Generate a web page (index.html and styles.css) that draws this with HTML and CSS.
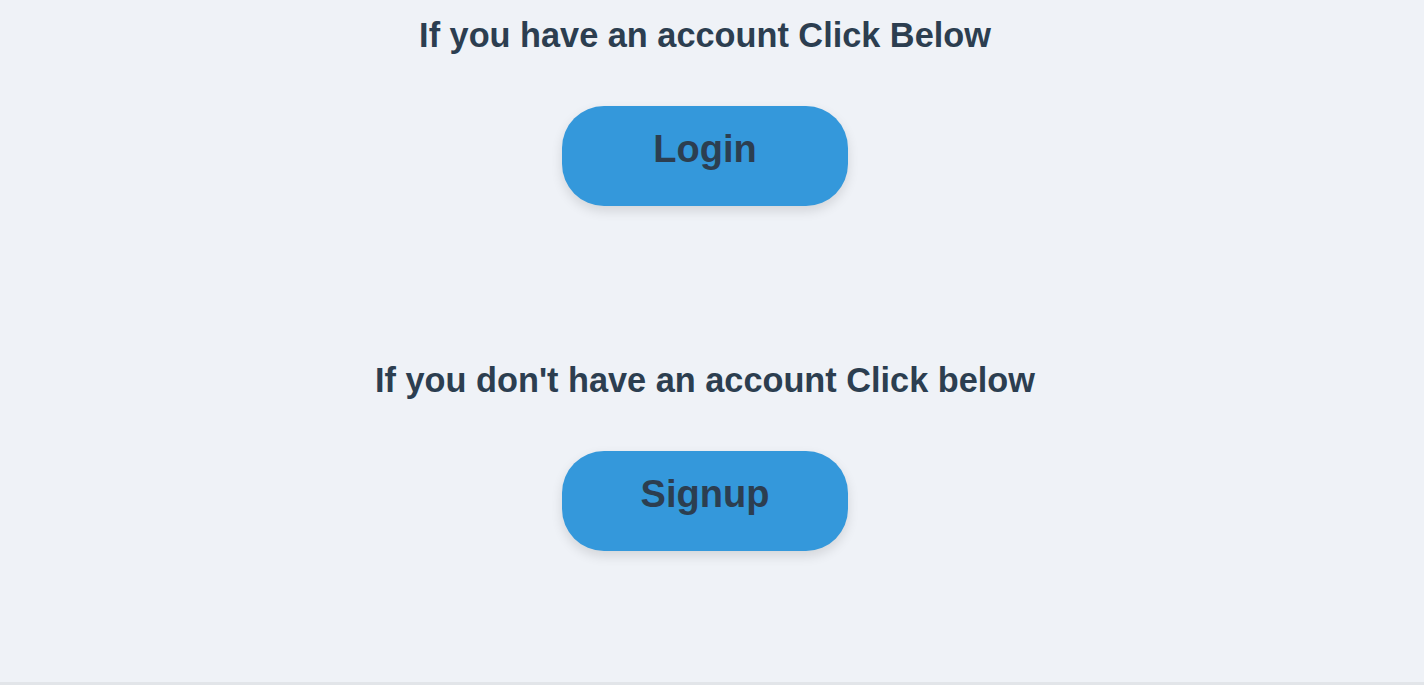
FILE: index.html
```html
<!DOCTYPE html>
<html lang="en">
<head>
<meta charset="utf-8">
<title>Welcome</title>
<link rel="stylesheet" href="styles.css">
</head>
<body>
<main class="page">
  <section class="block">
    <h2 class="prompt">If you have an account Click Below</h2>
    <button class="action">Login</button>
  </section>
  <section class="block">
    <h2 class="prompt">If you don't have an account Click below</h2>
    <button class="action">Signup</button>
  </section>
</main>
</body>
</html>
```
FILE: styles.css
```css
html, body {
  margin: 0;
  padding: 0;
  background: #eff2f7;
}
body {
  height: 682px;
  border-bottom: 3px solid #e2e5e9;
  font-family: "Liberation Sans", Arial, sans-serif;
  color: #2c3e50;
}
.page {
  display: flex;
  flex-direction: column;
  align-items: center;
  padding-top: 15px;
  padding-right: 14px;
  gap: 154px;
}
.block {
  display: flex;
  flex-direction: column;
  align-items: center;
}
.prompt {
  margin: 0;
  font-size: 34.3px;
  line-height: 40px;
  font-weight: bold;
  color: #2c3e50;
}
.action {
  margin-top: 51px;
  width: 286px;
  height: 100px;
  border: none;
  border-radius: 42px;
  background: #3498db;
  color: #2c3e50;
  font-family: "Liberation Sans", Arial, sans-serif;
  font-weight: bold;
  font-size: 38px;
  box-shadow: 0 5px 12px rgba(0, 0, 0, 0.12);
  cursor: pointer;
  padding: 0 0 14px 0;
}
```
